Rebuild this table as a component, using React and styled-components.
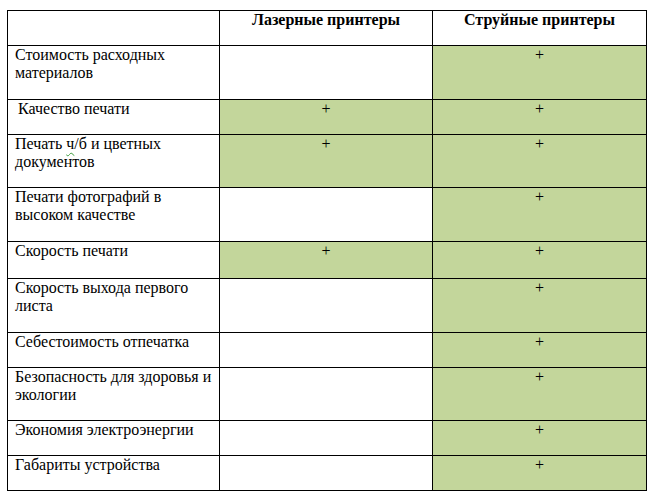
import React from "react";
import styled, { createGlobalStyle } from "styled-components";

const GlobalStyle = createGlobalStyle`
  html, body {
    margin: 0;
    padding: 0;
    background: #ffffff;
  }
  body {
    font-family: "Liberation Serif", "Times New Roman", serif;
    color: #000000;
  }
`;

const Page = styled.div`
  padding: 10px 0 0 7px;
`;

const Table = styled.table`
  border-collapse: collapse;
  table-layout: fixed;
  width: 639px;
  font-family: "Liberation Serif", "Times New Roman", serif;
  font-size: 16px;
  line-height: 18px;
  color: #000;
`;

const HeadCell = styled.th`
  border: 1px solid #000;
  height: 34px;
  padding: 0 7px;
  vertical-align: top;
  text-align: center;
  font-weight: bold;
`;

const Row = styled.tr`
  height: ${(p) => p.$h}px;
`;

const LabelCell = styled.td`
  border: 1px solid #000;
  padding: 0 6px 0 ${(p) => (p.$indent ? 10 : 7)}px;
  vertical-align: top;
  text-align: left;
`;

const MarkCell = styled.td`
  border: 1px solid #000;
  padding: 0 7px;
  vertical-align: top;
  text-align: center;
  background: ${(p) => (p.$on ? "#c3d69b" : "#ffffff")};
`;

const Spell = styled.span`
  text-decoration: underline wavy #3a9a3a;
  text-decoration-thickness: 1px;
  text-underline-offset: 3px;
`;

const rows = [
  { label: "Стоимость расходных материалов", laser: false, ink: true, h: 54 },
  { label: "Качество печати", laser: true, ink: true, h: 35, indent: true },
  {
    label: (
      <>
        Печать <Spell>ч</Spell>/б и цветных документов
      </>
    ),
    laser: true,
    ink: true,
    h: 53,
  },
  { label: "Печати фотографий в высоком качестве", laser: false, ink: true, h: 54 },
  { label: "Скорость печати", laser: true, ink: true, h: 37 },
  { label: "Скорость выхода первого листа", laser: false, ink: true, h: 54 },
  { label: "Себестоимость отпечатка", laser: false, ink: true, h: 35 },
  { label: "Безопасность для здоровья и экологии", laser: false, ink: true, h: 53 },
  { label: "Экономия электроэнергии", laser: false, ink: true, h: 35 },
  { label: "Габариты устройства", laser: false, ink: true, h: 35 },
];

export default function App() {
  return (
    <Page>
      <GlobalStyle />
      <Table>
        <colgroup>
          <col style={{ width: 212 }} />
          <col style={{ width: 213 }} />
          <col style={{ width: 214 }} />
        </colgroup>
        <thead>
          <tr>
            <HeadCell />
            <HeadCell>Лазерные принтеры</HeadCell>
            <HeadCell>Струйные принтеры</HeadCell>
          </tr>
        </thead>
        <tbody>
          {rows.map((r, i) => (
            <Row key={i} $h={r.h}>
              <LabelCell $indent={r.indent}>{r.label}</LabelCell>
              <MarkCell $on={r.laser}>{r.laser ? "+" : ""}</MarkCell>
              <MarkCell $on={r.ink}>{r.ink ? "+" : ""}</MarkCell>
            </Row>
          ))}
        </tbody>
      </Table>
    </Page>
  );
}
